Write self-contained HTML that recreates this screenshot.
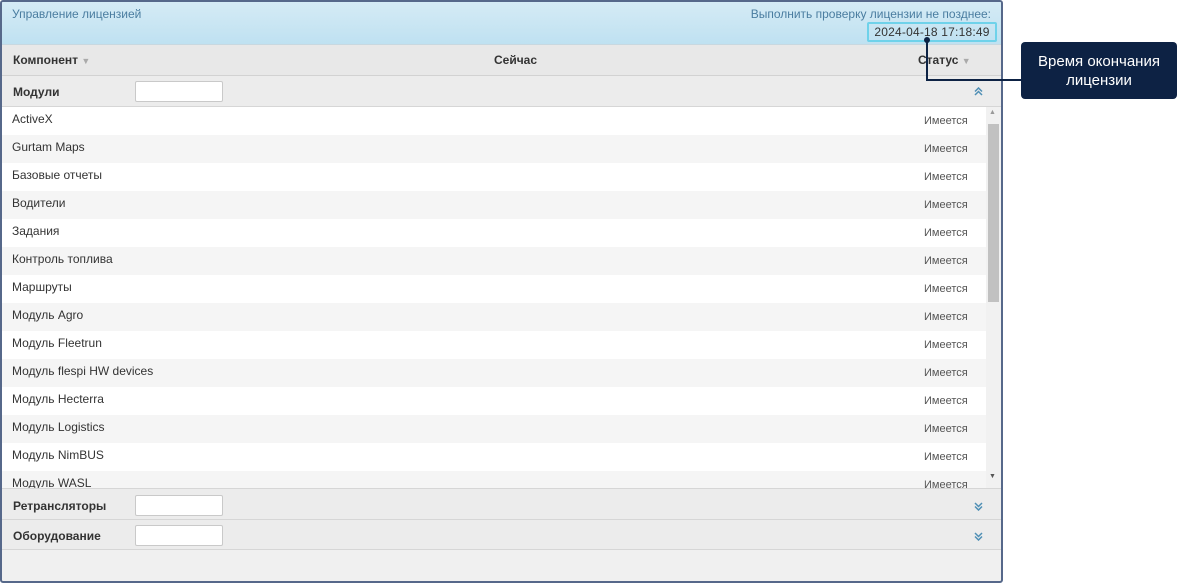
<!DOCTYPE html><html><head><meta charset="utf-8"><style>
body{margin:0;width:1180px;height:583px;background:#fff;font-family:"Liberation Sans",Arial,sans-serif;position:relative;overflow:hidden}
.p{position:absolute;left:0;top:0;width:999px;height:579px;border:2px solid #56688a;border-radius:3px;background:#f0f0f0;overflow:hidden}
.hd{position:absolute;left:0;top:0;width:999px;height:42px;background:linear-gradient(#d5ebf5,#bfe1f1);border-bottom:1px solid #c8d8e0}
.t{position:absolute;font-size:12px;color:#4a7da0}
.ch{position:absolute;top:43px;left:0;width:999px;height:30px;background:#e8e8e8;border-bottom:1px solid #d2d2d2;font-size:12px;font-weight:bold;color:#333}
.grp{position:absolute;left:0;width:999px;background:#ececec;border-bottom:1px solid #d6d6d6;font-size:12px;font-weight:bold;color:#333}
.inp{position:absolute;left:133px;width:86px;height:19px;background:#fff;border:1px solid #c9c9c9;border-radius:2px}
.row{position:absolute;left:0;width:984px;height:28px;font-size:12px;color:#333}
.row span{position:absolute;left:10px;top:5px}
.row i{position:absolute;left:922px;top:8px;font-style:normal;font-size:11px;color:#555}
.ar{position:absolute;left:972px}
</style></head><body>
<div class="p">
<div class="hd"><div class="t" style="left:10px;top:5px">Управление лицензией</div>
<div class="t" style="right:10px;top:5px">Выполнить проверку лицензии не позднее:</div>
<div style="position:absolute;left:865px;top:20px;width:126px;height:16px;border:2px solid #6fd2ea;border-radius:2px;font-size:12px;color:#333;text-align:center;line-height:16px;letter-spacing:.2px">2024-04-18 17:18:49</div></div>
<div class="ch"><span style="position:absolute;left:11px;top:8px">Компонент <span style="color:#aaa;font-size:9px">▼</span></span><span style="position:absolute;left:492px;top:8px">Сейчас</span><span style="position:absolute;left:916px;top:8px">Статус <span style="color:#aaa;font-size:9px">▼</span></span></div>
<div class="grp" style="top:74px;height:30px"><span style="position:absolute;left:11px;top:9px">Модули</span><div class="inp" style="top:5px"></div><svg class="ar" style="top:11px" width="9" height="9" viewBox="0 0 9 9"><path d="M1 4.5L4.5 1L8 4.5M1 8L4.5 4.5L8 8" fill="none" stroke="#4f8fb5" stroke-width="1.5"/></svg></div>
<div style="position:absolute;top:105px;left:0;width:999px;height:381px;background:#fff;overflow:hidden">
<div class="row" style="top:0;background:#fff"><span>ActiveX</span><i>Имеется</i></div>
<div class="row" style="top:28px;background:#f5f5f5"><span>Gurtam Maps</span><i>Имеется</i></div>
<div class="row" style="top:56px;background:#fff"><span>Базовые отчеты</span><i>Имеется</i></div>
<div class="row" style="top:84px;background:#f5f5f5"><span>Водители</span><i>Имеется</i></div>
<div class="row" style="top:112px;background:#fff"><span>Задания</span><i>Имеется</i></div>
<div class="row" style="top:140px;background:#f5f5f5"><span>Контроль топлива</span><i>Имеется</i></div>
<div class="row" style="top:168px;background:#fff"><span>Маршруты</span><i>Имеется</i></div>
<div class="row" style="top:196px;background:#f5f5f5"><span>Модуль Agro</span><i>Имеется</i></div>
<div class="row" style="top:224px;background:#fff"><span>Модуль Fleetrun</span><i>Имеется</i></div>
<div class="row" style="top:252px;background:#f5f5f5"><span>Модуль flespi HW devices</span><i>Имеется</i></div>
<div class="row" style="top:280px;background:#fff"><span>Модуль Hecterra</span><i>Имеется</i></div>
<div class="row" style="top:308px;background:#f5f5f5"><span>Модуль Logistics</span><i>Имеется</i></div>
<div class="row" style="top:336px;background:#fff"><span>Модуль NimBUS</span><i>Имеется</i></div>
<div class="row" style="top:364px;background:#f5f5f5"><span>Модуль WASL</span><i>Имеется</i></div>
<div style="position:absolute;left:984px;top:0;width:15px;height:381px;background:#f1f1f1"><div style="position:absolute;left:2px;top:17px;width:11px;height:178px;background:#c1c1c1"></div><div style="position:absolute;left:3px;top:2px;font-size:7px;color:#999">▲</div><div style="position:absolute;left:3px;top:366px;font-size:7px;color:#555">▼</div></div>
</div>
<div class="grp" style="top:486px;height:30px;border-top:1px solid #d6d6d6"><span style="position:absolute;left:11px;top:10px">Ретрансляторы</span><div class="inp" style="top:6px"></div><svg class="ar" style="top:13px" width="9" height="9" viewBox="0 0 9 9"><path d="M1 1L4.5 4.5L8 1M1 4.5L4.5 8L8 4.5" fill="none" stroke="#4f8fb5" stroke-width="1.5"/></svg></div>
<div class="grp" style="top:518px;height:29px"><span style="position:absolute;left:11px;top:9px">Оборудование</span><div class="inp" style="top:5px"></div><svg class="ar" style="top:12px" width="9" height="9" viewBox="0 0 9 9"><path d="M1 1L4.5 4.5L8 1M1 4.5L4.5 8L8 4.5" fill="none" stroke="#4f8fb5" stroke-width="1.5"/></svg></div>
</div>
<div style="position:absolute;left:924px;top:37px;width:6px;height:6px;border-radius:50%;background:#0d2244"></div>
<div style="position:absolute;left:926px;top:40px;width:2px;height:40px;background:#0d2244"></div>
<div style="position:absolute;left:926px;top:79px;width:96px;height:2px;background:#0d2244"></div>
<div style="position:absolute;left:1021px;top:42px;width:156px;height:57px;background:#0d2244;border-radius:4px;color:#fff;font-size:15px;text-align:center;line-height:19px;padding-top:10px;box-sizing:border-box">Время окончания<br>лицензии</div>
</body></html>
